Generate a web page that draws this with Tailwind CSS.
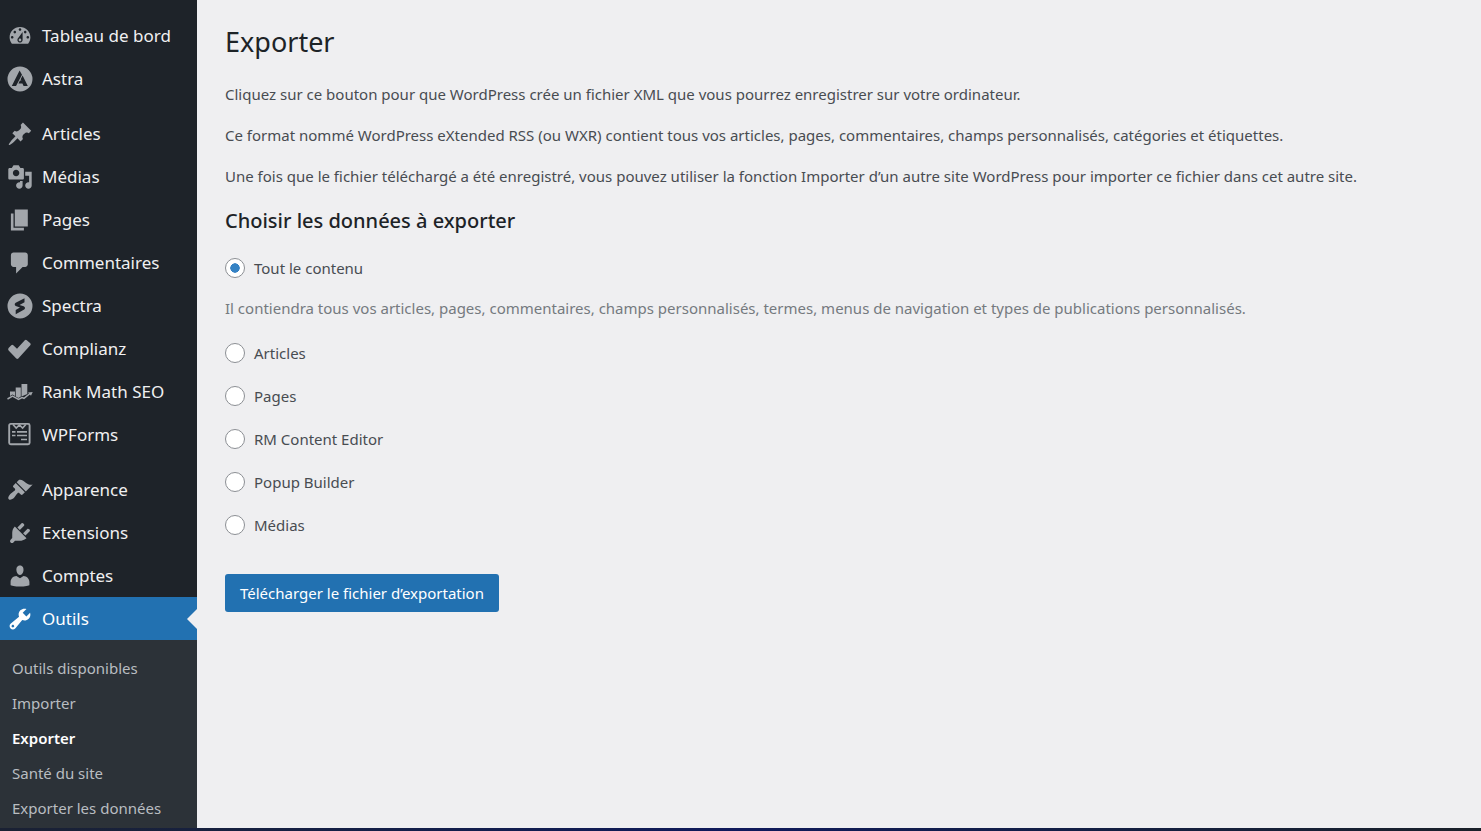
<!DOCTYPE html>
<html lang="fr">
<head>
  <meta charset="UTF-8">
  <meta name="viewport" content="width=device-width, initial-scale=1.0">
  <title>Exporter - WordPress</title>
  <script src="https://cdn.jsdelivr.net/npm/@tailwindcss/browser@4"></script>
</head>
<body class="flex flex-col min-h-screen bg-[#efeff1] font-['Noto_Sans',sans-serif]">

  <div class="flex flex-1">

    <!-- Admin menu -->
    <nav class="w-[197px] shrink-0 bg-[#1e2329] pt-[14px] text-[17px] text-[#f0f0f1]">
      <ul>
        <li><a href="#" class="flex items-center gap-[9px] h-[43px] pl-[7px]">
          <svg class="size-[26px] shrink-0 fill-[#a2a6ab]" viewBox="0 0 20 20"><path d="M3.76 16h12.48c1.1-1.37 1.76-3.11 1.76-5 0-4.42-3.58-8-8-8s-8 3.58-8 8c0 1.89.66 3.63 1.76 5zM10 4c.55 0 1 .45 1 1s-.45 1-1 1-1-.45-1-1 .45-1 1-1zM6 6c.55 0 1 .45 1 1s-.45 1-1 1-1-.45-1-1 .45-1 1-1zm8 0c.55 0 1 .45 1 1s-.45 1-1 1-1-.45-1-1 .45-1 1-1zm-5.37 5.55L12 7v6c0 1.1-.9 2-2 2s-2-.9-2-2c0-.57.24-1.08.63-1.45zM4 10c.55 0 1 .45 1 1s-.45 1-1 1-1-.45-1-1 .45-1 1-1zm12 0c.55 0 1 .45 1 1s-.45 1-1 1-1-.45-1-1 .45-1 1-1zm-5 3c0-.55-.45-1-1-1s-1 .45-1 1 .45 1 1 1 1-.45 1-1z"/></svg>
          Tableau de bord</a></li>
        <li><a href="#" class="flex items-center gap-[9px] h-[43px] pl-[7px]">
          <svg class="size-[26px] shrink-0 fill-[#a2a6ab]" viewBox="0 0 26 26"><path fill-rule="evenodd" d="M13 .5a12.500 12.500 0 1 0 0 25a12.500 12.500 0 1 0 0-25zM12.600 4.500L15 8.700L9 20H4.800zM15.600 9.500L20.800 20H16.600L15.400 17.400H11.400L12.900 14.400H14.400L13.600 13.200z"/></svg>
          Astra</a></li>
      </ul>
      <ul class="mt-3">
        <li><a href="#" class="flex items-center gap-[9px] h-[43px] pl-[7px]">
          <svg class="size-[26px] shrink-0 fill-[#a2a6ab]" viewBox="0 0 20 20"><path d="M10.440 3.020l1.820-1.820 6.360 6.350-1.830 1.820c-1.050-.68-2.480-.57-3.410.36l-.75.75c-.92.93-1.040 2.350-.35 3.410l-1.830 1.820-2.410-2.410-2.800 2.790c-.42.42-3.380 2.710-3.800 2.290s1.860-3.390 2.280-3.810l2.790-2.790L4.100 9.360l1.830-1.820c1.050.69 2.480.57 3.400-.36l.75-.75c.93-.92 1.050-2.350.36-3.410z"/></svg>
          Articles</a></li>
        <li><a href="#" class="flex items-center gap-[9px] h-[43px] pl-[7px]">
          <svg class="size-[26px] shrink-0 fill-[#a2a6ab]" viewBox="0 0 20 20"><path d="M13 11V4c0-.55-.45-1-1-1h-1.670L9 1H5L3.670 3H2c-.55 0-1 .45-1 1v7c0 .55.45 1 1 1h10c.55 0 1-.45 1-1zM7 4.500c1.380 0 2.500 1.120 2.500 2.500S8.380 9.500 7 9.500 4.500 8.380 4.500 7 5.620 4.500 7 4.500zM14 6h5v10.500c0 1.380-1.120 2.500-2.500 2.500S14 17.880 14 16.500s1.120-2.500 2.500-2.500c.17 0 .34.02.5.05V9h-3V6zm-4 8.050V13h2v3.500c0 1.380-1.120 2.500-2.500 2.500S7 17.880 7 16.500 8.120 14 9.500 14c.17 0 .34.02.5.05z"/></svg>
          Médias</a></li>
        <li><a href="#" class="flex items-center gap-[9px] h-[43px] pl-[7px]">
          <svg class="size-[26px] shrink-0 fill-[#a2a6ab]" viewBox="0 0 20 20"><path d="M6 15V2h10v13H6zm-1 1h8v2H3V5h2v11z"/></svg>
          Pages</a></li>
        <li><a href="#" class="flex items-center gap-[9px] h-[43px] pl-[7px]">
          <svg class="size-[26px] shrink-0 fill-[#a2a6ab]" viewBox="0 0 20 20"><path d="M5 2h9c1.100 0 2 .9 2 2v7c0 1.100-.9 2-2 2h-2l-5 5v-5H5c-1.100 0-2-.9-2-2V4c0-1.100.9-2 2-2z"/></svg>
          Commentaires</a></li>
        <li><a href="#" class="flex items-center gap-[9px] h-[43px] pl-[7px]">
          <svg class="size-[26px] shrink-0 fill-[#a2a6ab]" viewBox="0 0 26 26"><path fill-rule="evenodd" d="M13 .5a12.500 12.500 0 1 0 0 25a12.500 12.500 0 1 0 0-25zM17.500 5.200V9.300L12.500 12L16.700 13.300Q19 14.700 17.200 16.600L8.700 21.200V17L13 14.500L8.700 13Q6.700 11.300 8.700 9.700z"/></svg>
          Spectra</a></li>
        <li><a href="#" class="flex items-center gap-[9px] h-[43px] pl-[7px]">
          <svg class="size-[26px] shrink-0 fill-[#a2a6ab]" viewBox="0 0 26 26"><path d="M1.600 12L4.300 9.200Q5.300 8.300 6.300 9.200L10 12.700L17.800 4.200Q18.800 3.200 19.800 4.200L23.300 7.300Q24.200 8.300 23.300 9.300L11.300 22.500Q10.300 23.400 9.300 22.500L1.600 14.500Q.6 13.200 1.600 12z"/></svg>
          Complianz</a></li>
        <li><a href="#" class="flex items-center gap-[9px] h-[43px] pl-[7px]">
          <svg class="size-[26px] shrink-0 fill-[#a2a6ab]" viewBox="0 0 26 26"><path d="M3 12.500H8V17L5.500 15.500L3 17zM8.700 8.500H13.800V17.500L11.500 19L8.700 17.500zM14.500 5H20.300V15L14.500 17.500z"/><path fill="none" stroke="#a2a6ab" stroke-width="1.500" d="M.5 20L5.500 17.200L11.500 20.300L15 18.500L17 19.300L23 14.500"/><path d="M21 13.500L25.700 13L24 16.700z"/></svg>
          Rank Math SEO</a></li>
        <li><a href="#" class="flex items-center gap-[9px] h-[43px] pl-[7px]">
          <svg class="size-[26px] shrink-0 fill-none stroke-[#a2a6ab]" viewBox="0 0 26 26"><rect x="2.200" y="1.900" width="20.400" height="20.400" rx="1.500" stroke-width="1.900"/><path stroke-width="1.700" d="M6 2.500L9.200 6L12.400 3L15.600 6L18.800 2.500M5 9.800H8.500M10 9.800H20M5 13.500H8.500M10 13.500H20M14 17.500H20"/></svg>
          WPForms</a></li>
      </ul>
      <ul class="mt-3">
        <li><a href="#" class="flex items-center gap-[9px] h-[43px] pl-[7px]">
          <svg class="size-[26px] shrink-0 fill-[#a2a6ab]" viewBox="0 0 20 20"><path d="M14.480 11.060L7.410 3.990l1.500-1.500c.5-.56 2.300-.47 3.510.32 1.210.8 1.430 1.280 2.910 2.100 1.180.64 2.450 1.260 4.450.85zm-.71.71L6.700 4.700 4.930 6.470c-.39.39-.39 1.020 0 1.410l1.060 1.060c.39.39.39 1.030 0 1.420-.6.6-1.430 1.110-2.210 1.690-.35.26-.7.53-1.010.84C1.430 14.230.4 16.080 1.400 17.070c.99 1 2.840-.03 4.180-1.360.31-.31.58-.66.85-1.020.57-.78 1.080-1.610 1.690-2.210.39-.39 1.020-.39 1.410 0l1.060 1.060c.39.39 1.020.39 1.410 0z"/></svg>
          Apparence</a></li>
        <li><a href="#" class="flex items-center gap-[9px] h-[43px] pl-[7px]">
          <svg class="size-[26px] shrink-0 fill-[#a2a6ab]" viewBox="0 0 20 20"><path d="M13.110 4.360L9.870 7.600 8 5.730l3.240-3.240c.35-.34 1.050-.2 1.560.32.52.51.66 1.210.31 1.550zm-8 1.770l.91-1.120 9.010 9.010-1.190.84c-.71.71-2.630 1.160-3.820 1.160H6.140L4.900 17.260c-.59.59-1.540.59-2.120 0-.59-.58-.59-1.530 0-2.120l1.240-1.240v-3.880c0-1.130.4-3.190 1.090-3.890zm7.260 3.970l3.240-3.240c.34-.35 1.040-.21 1.550.31.52.51.66 1.210.31 1.550l-3.240 3.250z"/></svg>
          Extensions</a></li>
        <li><a href="#" class="flex items-center gap-[9px] h-[43px] pl-[7px]">
          <svg class="size-[26px] shrink-0 fill-[#a2a6ab]" viewBox="0 0 20 20"><path d="M10 9.250c-2.270 0-2.730-3.440-2.730-3.440C7 4.020 7.820 2 9.970 2c2.160 0 2.980 2.020 2.710 3.810 0 0-.41 3.440-2.680 3.440zm0 2.570L12.720 10c2.390 0 4.520 2.330 4.520 4.530v2.490s-3.650 1.130-7.240 1.130c-3.650 0-7.240-1.130-7.240-1.130v-2.490c0-2.250 1.940-4.480 4.470-4.480z"/></svg>
          Comptes</a></li>
        <li>
          <a href="#" class="relative flex items-center gap-[9px] h-[43px] pl-[7px] bg-[#2271b1] text-white">
            <svg class="size-[26px] shrink-0 fill-white" viewBox="0 0 20 20"><path d="M16.680 9.770c-1.340 1.340-3.300 1.670-4.950.99l-5.410 6.520c-.99.99-2.590.99-3.580 0s-.99-2.590 0-3.570l6.520-5.420c-.68-1.650-.35-3.610.99-4.950 1.280-1.280 3.120-1.620 4.720-1.060l-2.890 2.890 2.820 2.820 2.860-2.870c.53 1.580.18 3.390-1.080 4.650zM3.810 16.210c.4.39 1.040.39 1.430 0 .4-.4.4-1.040 0-1.430-.39-.4-1.030-.4-1.430 0-.39.39-.39 1.030 0 1.430z"/></svg>
            Outils
            <span class="absolute right-0 top-1/2 -translate-y-1/2 border-y-10 border-r-10 border-y-transparent border-r-[#efeff1]"></span>
          </a>
          <ul class="bg-[#2c3238] pt-[11px] pb-[2px] pl-3 text-[15px] text-[#b9bdc1]">
            <li><a href="#" class="flex items-center h-[35px]">Outils disponibles</a></li>
            <li><a href="#" class="flex items-center h-[35px]">Importer</a></li>
            <li><a href="#" class="flex items-center h-[35px] font-semibold text-white">Exporter</a></li>
            <li><a href="#" class="flex items-center h-[35px]">Santé du site</a></li>
            <li><a href="#" class="flex items-center h-[35px]">Exporter les données</a></li>
          </ul>
        </li>
      </ul>
    </nav>

    <!-- Export screen -->
    <main class="flex-1 pl-7 pr-5 pt-6 text-[15px] leading-5 text-[#484c51]">
      <h1 class="text-[27px] leading-9 text-[#1d2327]">Exporter</h1>
      <div class="mt-6 space-y-[21px]">
        <p>Cliquez sur ce bouton pour que WordPress crée un fichier XML que vous pourrez enregistrer sur votre ordinateur.</p>
        <p>Ce format nommé WordPress eXtended RSS (ou WXR) contient tous vos articles, pages, commentaires, champs personnalisés, catégories et étiquettes.</p>
        <p>Une fois que le fichier téléchargé a été enregistré, vous pouvez utiliser la fonction Importer d’un autre site WordPress pour importer ce fichier dans cet autre site.</p>
      </div>
      <h2 class="mt-[21px] text-[20px] leading-7 font-medium text-[#1d2327]">Choisir les données à exporter</h2>

      <form class="mt-[23px]">
        <label class="flex items-center gap-[9px]">
          <input type="radio" name="content" value="all" checked class="appearance-none size-5 rounded-full border border-[#8c8f94] bg-white checked:bg-radial checked:from-[#3582c4] checked:from-45% checked:to-white checked:to-50% bg-size-[14px_14px] bg-center bg-no-repeat">
          Tout le contenu
        </label>
        <p class="mt-5 text-[#757a7f]">Il contiendra tous vos articles, pages, commentaires, champs personnalisés, termes, menus de navigation et types de publications personnalisés.</p>
        <div class="mt-[25px] space-y-[23px]">
          <label class="flex items-center gap-[9px]">
            <input type="radio" name="content" value="posts" class="appearance-none size-5 rounded-full border border-[#8c8f94] bg-white">
            Articles
          </label>
          <label class="flex items-center gap-[9px]">
            <input type="radio" name="content" value="pages" class="appearance-none size-5 rounded-full border border-[#8c8f94] bg-white">
            Pages
          </label>
          <label class="flex items-center gap-[9px]">
            <input type="radio" name="content" value="rm_content_editor" class="appearance-none size-5 rounded-full border border-[#8c8f94] bg-white">
            RM Content Editor
          </label>
          <label class="flex items-center gap-[9px]">
            <input type="radio" name="content" value="popupbuilder" class="appearance-none size-5 rounded-full border border-[#8c8f94] bg-white">
            Popup Builder
          </label>
          <label class="flex items-center gap-[9px]">
            <input type="radio" name="content" value="attachment" class="appearance-none size-5 rounded-full border border-[#8c8f94] bg-white">
            Médias
          </label>
        </div>
        <button type="submit" class="mt-[39px] h-[38px] px-[15px] rounded-[3px] bg-[#2271b1] text-white">Télécharger le fichier d’exportation</button>
      </form>
    </main>

  </div>

  <footer class="h-[3px] bg-linear-to-r from-[#1a2133] via-[#101a5c] to-[#1a2029]"></footer>

</body>
</html>
